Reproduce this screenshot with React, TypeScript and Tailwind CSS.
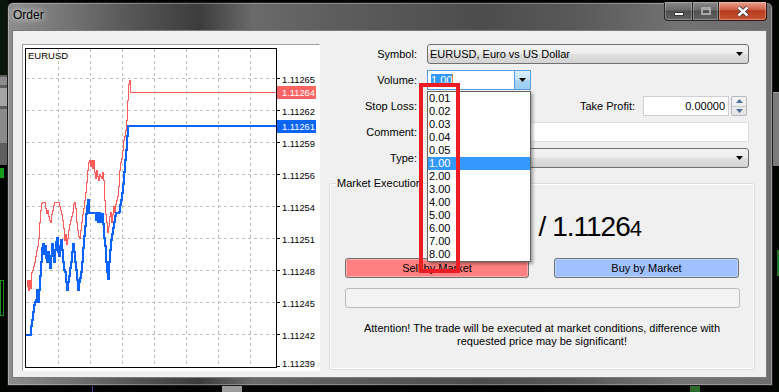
import React from "react";

const redPts: [number, number][] = [
  [26, 286], [27, 280], [28, 290], [29, 280], [30, 288], [31, 272], [32, 270], [33, 266], [34, 262], [35, 256],
  [36, 250], [37, 246], [38, 238], [39, 222], [40, 210], [41, 203], [42, 202], [45, 208], [46, 213], [47, 210],
  [48, 216], [49, 220], [50, 222], [51, 214], [52, 210], [53, 205], [54, 202], [59, 206], [60, 210], [61, 214],
  [62, 220], [63, 228], [64, 240], [65, 234], [66, 244], [67, 238], [68, 230], [69, 224], [70, 220], [71, 216],
  [72, 212], [73, 204], [74, 202], [75, 208], [76, 222], [77, 230], [78, 236], [79, 238], [80, 230], [81, 222],
  [82, 214], [83, 208], [84, 200], [85, 192], [86, 182], [87, 170], [88, 162], [89, 160], [90, 166], [91, 160],
  [92, 168], [93, 160], [94, 172], [95, 178], [96, 170], [97, 176], [98, 180], [99, 174], [100, 176], [101, 178],
  [102, 172], [103, 180], [104, 200], [105, 214], [106, 222], [107, 232], [108, 226], [109, 216], [110, 212],
  [111, 222], [112, 214], [113, 206], [114, 212], [115, 204], [116, 200], [117, 196], [118, 186], [119, 170],
  [120, 162], [121, 158], [122, 150], [123, 140], [124, 136], [125, 130], [126, 120], [127, 100], [128, 84],
  [129, 80], [130, 92], [276, 92],
];

const bluePts: [number, number][] = [
  [25, 335], [31, 326], [32, 320], [33, 312], [34, 305], [35, 302], [36, 300], [37, 290], [38, 302], [39, 290],
  [40, 276], [41, 262], [42, 248], [43, 244], [44, 254], [45, 246], [46, 258], [47, 262], [48, 252], [49, 262],
  [50, 268], [51, 256], [52, 244], [53, 254], [54, 262], [55, 250], [56, 242], [57, 238], [58, 252], [59, 256],
  [60, 246], [61, 240], [62, 250], [63, 262], [64, 270], [65, 272], [66, 282], [67, 290], [68, 282], [69, 276],
  [70, 268], [71, 262], [72, 252], [73, 244], [74, 252], [75, 262], [76, 270], [77, 280], [78, 290], [79, 282],
  [80, 278], [81, 272], [82, 262], [83, 248], [84, 236], [85, 226], [86, 214], [87, 206], [88, 200], [89, 213],
  [96, 220], [97, 213], [98, 222], [99, 213], [100, 218], [101, 222], [102, 214], [103, 224], [104, 238],
  [105, 246], [106, 262], [107, 272], [108, 279], [109, 262], [110, 250], [111, 240], [112, 234], [113, 228],
  [114, 222], [115, 216], [116, 213], [119, 212], [120, 205], [121, 200], [122, 193], [123, 184], [124, 172],
  [125, 160], [126, 150], [127, 136], [128, 126], [276, 126],
];

function stepPath(pts: [number, number][]) {
  let d = `M${pts[0][0]} ${pts[0][1]}`;
  for (let i = 1; i < pts.length; i++) d += ` H${pts[i][0]} V${pts[i][1]}`;
  return d;
}

const gridX = [58.5, 90.5, 122.5, 154.5, 186.5, 218.5, 250.5];
const axis: [number, string][] = [
  [78.5, "1.11265"], [110.5, "1.11262"], [142.5, "1.11259"], [174.5, "1.11256"], [206.5, "1.11254"],
  [238.5, "1.11251"], [270.5, "1.11248"], [302.5, "1.11245"], [334.5, "1.11242"],
];

const FF = "Liberation Sans, Arial, sans-serif";

function Chart() {
  return (
    <svg width="297" height="326" viewBox="23 45 297 326" className="block">
      <rect x="23" y="45" width="297" height="326" fill="#ffffff" />
      <g shapeRendering="crispEdges">
        {gridX.map((x) => (
          <line key={x} x1={x} y1={49} x2={x} y2={367} stroke="#c0c0c0" strokeWidth="1" strokeDasharray="3 3" />
        ))}
        {axis.map(([y]) => (
          <line key={y} x1={26} y1={y} x2={276} y2={y} stroke="#c0c0c0" strokeWidth="1" strokeDasharray="3 3" />
        ))}
        <g transform="translate(0.5 0.5)">
          <path d={stepPath(redPts)} fill="none" stroke="#ff5c5c" strokeWidth="1" />
        </g>
        <path d={stepPath(bluePts)} fill="none" stroke="#0a62ff" strokeWidth="2" />
        <rect x="25.5" y="48.5" width="251" height="319" fill="none" stroke="#000" strokeWidth="1" />
        {axis.map(([y, t]) => (
          <line key={t} x1={276} y1={y} x2={280} y2={y} stroke="#000" strokeWidth="1" />
        ))}
        <line x1={276} y1={366.5} x2={280} y2={366.5} stroke="#000" strokeWidth="1" />
        <rect x="277" y="86" width="39" height="13" fill="#ff6464" />
        <rect x="277" y="120" width="39" height="13" fill="#0a64f5" />
      </g>
      <text x="28" y="59" fontFamily={FF} fontSize="9.5" fill="#000">EURUSD</text>
      {axis.map(([y, t]) => (
        <text key={t} x="282" y={y + 4} fontFamily={FF} fontSize="9.3" fill="#000">{t}</text>
      ))}
      <text x="282" y="367" fontFamily={FF} fontSize="9.3" fill="#000">1.11239</text>
      <text x="282" y="96" fontFamily={FF} fontSize="9.3" fill="#fff">1.11264</text>
      <text x="282" y="130" fontFamily={FF} fontSize="9.3" fill="#fff">1.11261</text>
    </svg>
  );
}

function Tri() {
  return (
    <svg width="7" height="4" viewBox="0 0 7 4" className="block">
      <polygon points="0,0 7,0 3.5,4" fill="#000" />
    </svg>
  );
}

function Spinner() {
  return (
    <div className="w-[16px] h-[20px] ml-[2px] flex flex-col rounded-[2px] border border-[#b5b9bf] bg-[linear-gradient(#f6f6f6,#e4e4e4)]">
      <div className="flex-1 flex items-center justify-center border-b border-[#c6c9ce]">
        <svg width="7" height="4" viewBox="0 0 7 4" className="block">
          <polygon points="0,4 3.5,0 7,4" fill="#51709f" />
        </svg>
      </div>
      <div className="flex-1 flex items-center justify-center">
        <svg width="7" height="4" viewBox="0 0 7 4" className="block">
          <polygon points="0,0 7,0 3.5,4" fill="#51709f" />
        </svg>
      </div>
    </div>
  );
}

const volumes = ["0.01", "0.02", "0.03", "0.04", "0.05", "1.00", "2.00", "3.00", "4.00", "5.00", "6.00", "7.00", "8.00"];

export default function App() {
  return (
    <div className="relative w-[779px] h-[392px] overflow-hidden bg-[#020402] font-['Liberation_Sans',Arial,sans-serif] text-[11px] text-black">
      {/* desktop behind the dialog */}
      <div className="absolute left-0 top-0 w-[8px] h-[75px] bg-[#0b160b]" />
      <div className="absolute left-0 top-[75px] w-[8px] h-[90px] bg-[#5e5e5e] flex flex-col gap-[3px] py-[2px]">
        <div className="h-[8px] bg-[#8c8c8c]" />
        <div className="h-[18px] bg-[#a4a4a4]" />
        <div className="h-[34px] bg-[#8a8a8a]" />
      </div>
      <div className="absolute left-0 top-[168px] w-[4px] h-[10px] bg-[#1a9a1a]" />
      <div className="absolute left-0 top-[280px] w-[4px] h-[36px] border border-[#1f8f1f]" />
      <div className="absolute right-0 top-[92px] w-[6px] h-[74px] bg-[#7b7b7b] border-t border-[#a0a0a0]" />
      <div className="absolute right-0 top-[250px] w-[2px] h-[26px] bg-[#1a7a1a]" />
      <div className="absolute left-[222px] bottom-0 w-[20px] h-[6px] bg-[#9c9c9c]" />
      <div className="absolute left-[92px] bottom-0 w-[1px] h-[6px] bg-[#5a3a8a]" />
      <div className="absolute left-[690px] bottom-0 w-[10px] h-[6px] bg-[#2a6a2a]" />

      {/* dialog window */}
      <div className="absolute left-[7px] top-[2px] w-[766px] h-[384px] rounded-t-[6px] border border-[#1c1c1c] flex flex-col bg-[linear-gradient(90deg,#8c8c8c_0%,#7a7a7a_6%,#5a5a5a_15%,#454545_22%,#3c3c3c_25%,#6a6a6a_32%,#5e5e5e_42%,#4c4c4c_62%,#5a5a5a_75%,#737373_88%,#6e6e6e_100%)] shadow-[inset_0_0_0_1px_rgba(255,255,255,0.28)]">
        <div className="h-[27px] flex justify-between">
          <div className="pl-[5px] pt-[4px] text-[12px] leading-[16px] text-black [text-shadow:0_0_6px_rgba(255,255,255,0.9),0_0_10px_rgba(255,255,255,0.6)]">
            Order
          </div>
          <div className="flex mr-[5px] -mt-[1px] h-[19px]">
            <div className="w-[29px] h-full rounded-bl-[4px] border border-t-0 border-[#262626] bg-[linear-gradient(#8a8a8a,#6a6a6a_45%,#4e4e4e_50%,#646464)] flex items-end justify-center pb-[4px] shadow-[inset_0_0_0_1px_rgba(255,255,255,0.25)]">
              <div className="w-[10px] h-[4px] bg-white border border-[#3a3a3a]" />
            </div>
            <div className="w-[26px] h-full border-b border-r border-[#262626] bg-[linear-gradient(#8a8a8a,#6a6a6a_45%,#4e4e4e_50%,#646464)] flex items-center justify-center shadow-[inset_0_0_0_1px_rgba(255,255,255,0.25)]">
              <div className="w-[10px] h-[8px] border-2 border-t-[3px] border-[#a8a8a8]" />
            </div>
            <div className="w-[48px] h-full rounded-br-[4px] border-b border-r border-[#3a140c] bg-[linear-gradient(#e7a290,#d2654a_40%,#b83a1e_50%,#c85434)] flex items-center justify-center shadow-[inset_0_0_0_1px_rgba(255,255,255,0.3)]">
              <svg width="14" height="11" viewBox="0 0 14 11" className="block">
                <path d="M2.5 1.5 L11.5 9.5 M11.5 1.5 L2.5 9.5" stroke="#3a3a3a" strokeWidth="4.2" />
                <path d="M2.5 1.5 L11.5 9.5 M11.5 1.5 L2.5 9.5" stroke="#ffffff" strokeWidth="2.4" />
              </svg>
            </div>
          </div>
        </div>

        {/* client area */}
        <div className="flex-1 ml-[4px] mr-[5px] mb-[7px] border border-[#7a7a7a] bg-[#f0f0f0] flex pl-[9px] pt-[13px]">
          <div className="w-[298px] h-[327px] border border-t-[#a0a0a0] border-l-[#a0a0a0] border-r-white border-b-white overflow-hidden">
            <Chart />
          </div>

          <div className="flex-1 flex flex-col">
            <div className="grid grid-cols-[97px_322px] gap-x-[10px] gap-y-[6px]">
              <div className="text-right leading-[20px]">Symbol:</div>
              <div className="h-[20px] rounded-[3px] border border-[#707070] bg-[linear-gradient(#f3f3f3,#ececec_50%,#dfdfdf_51%,#d3d3d3)] flex items-center justify-between pl-[2px] pr-[5px]">
                <span className="leading-[18px]">EURUSD, Euro vs US Dollar</span>
                <Tri />
              </div>

              <div className="text-right leading-[20px]">Volume:</div>
              <div className="relative h-[20px] w-[104px]">
                <div className="h-[20px] w-[104px] border border-[#569de5] bg-white flex items-center">
                  <div className="flex-1 pl-[3px] flex items-center">
                    <span className="bg-[#3399ff] text-white leading-[12px]">1.00</span>
                    <span className="w-[1px] h-[12px] bg-[#e08a2a]" />
                  </div>
                  <div className="w-[16px] h-full border-l border-[#569de5] bg-[linear-gradient(#dceffc,#c4e3f8_50%,#a9d6f5_51%,#9acdf1)] flex items-center justify-center">
                    <Tri />
                  </div>
                </div>
                <div className="absolute left-0 top-[21px] w-[104px] h-[171px] bg-white border border-[#646464] z-20 shadow-[2px_2px_3px_rgba(0,0,0,0.35)]">
                  {volumes.map((v) => (
                    <div
                      key={v}
                      className={
                        v === "1.00"
                          ? "h-[13px] leading-[13px] pl-[1px] bg-[#3399ff] text-white"
                          : "h-[13px] leading-[13px] pl-[1px]"
                      }
                    >
                      {v}
                    </div>
                  ))}
                </div>
                <div className="absolute left-[-8px] top-[13px] w-[41px] h-[190px] border-[4px] border-[#ec1c24] z-30" />
              </div>

              <div className="text-right leading-[20px]">Stop Loss:</div>
              <div className="flex h-[20px] pr-[2px]">
                <div className="w-[86px] h-[20px] bg-white border border-[#cdd1d6]" />
                <Spinner />
                <div className="flex-1 text-right pr-[8px] leading-[20px]">Take Profit:</div>
                <div className="w-[86px] h-[20px] bg-white border border-[#cdd1d6] text-right pr-[3px] leading-[18px]">0.00000</div>
                <Spinner />
              </div>

              <div className="text-right leading-[20px]">Comment:</div>
              <div className="h-[20px] bg-white border border-[#dcdfe3]" />

              <div className="text-right leading-[20px]">Type:</div>
              <div className="h-[20px] rounded-[3px] border border-[#707070] bg-[linear-gradient(#f3f3f3,#ececec_50%,#dfdfdf_51%,#d3d3d3)] flex items-center justify-end pl-[2px] pr-[5px]">
                <Tri />
              </div>
            </div>

            <div className="relative mt-[15px] ml-[9px] w-[426px] h-[187px] rounded-[3px] border border-[#d5dfe5] shadow-[inset_0_0_0_1px_#ffffff] flex flex-col items-center">
              <div className="absolute left-[6px] -top-[8px] px-[1px] bg-[#f0f0f0] leading-[14px]">Market Execution</div>
              <div className="mt-[28px] h-[29px] leading-[29px] text-[28px] tracking-[-1px] whitespace-nowrap">
                <span className="invisible">
                  1.1126<span className="text-[22px] tracking-normal">1</span>
                </span>{" "}
                / 1.1126<span className="text-[22px] tracking-normal">4</span>
              </div>
              <div className="mt-[17px] flex gap-[25px]">
                <div className="w-[184px] h-[20px] rounded-[3px] border border-[#707070] bg-[#ff8080] shadow-[inset_0_0_0_1px_rgba(255,255,255,0.35)] text-center leading-[18px]">
                  Sell by Market
                </div>
                <div className="w-[185px] h-[20px] rounded-[3px] border border-[#707070] bg-[#a0c0ff] shadow-[inset_0_0_0_1px_rgba(255,255,255,0.35)] text-center leading-[18px]">
                  Buy by Market
                </div>
              </div>
              <div className="mt-[10px] w-[395px] h-[20px] rounded-[3px] border border-[#bcbcbc] bg-[#f3f3f3]" />
              <div className="mt-[14px] text-center leading-[13px]">
                Attention! The trade will be executed at market conditions, difference with
                <br />
                requested price may be significant!
              </div>
            </div>
          </div>
        </div>
      </div>
    </div>
  );
}
